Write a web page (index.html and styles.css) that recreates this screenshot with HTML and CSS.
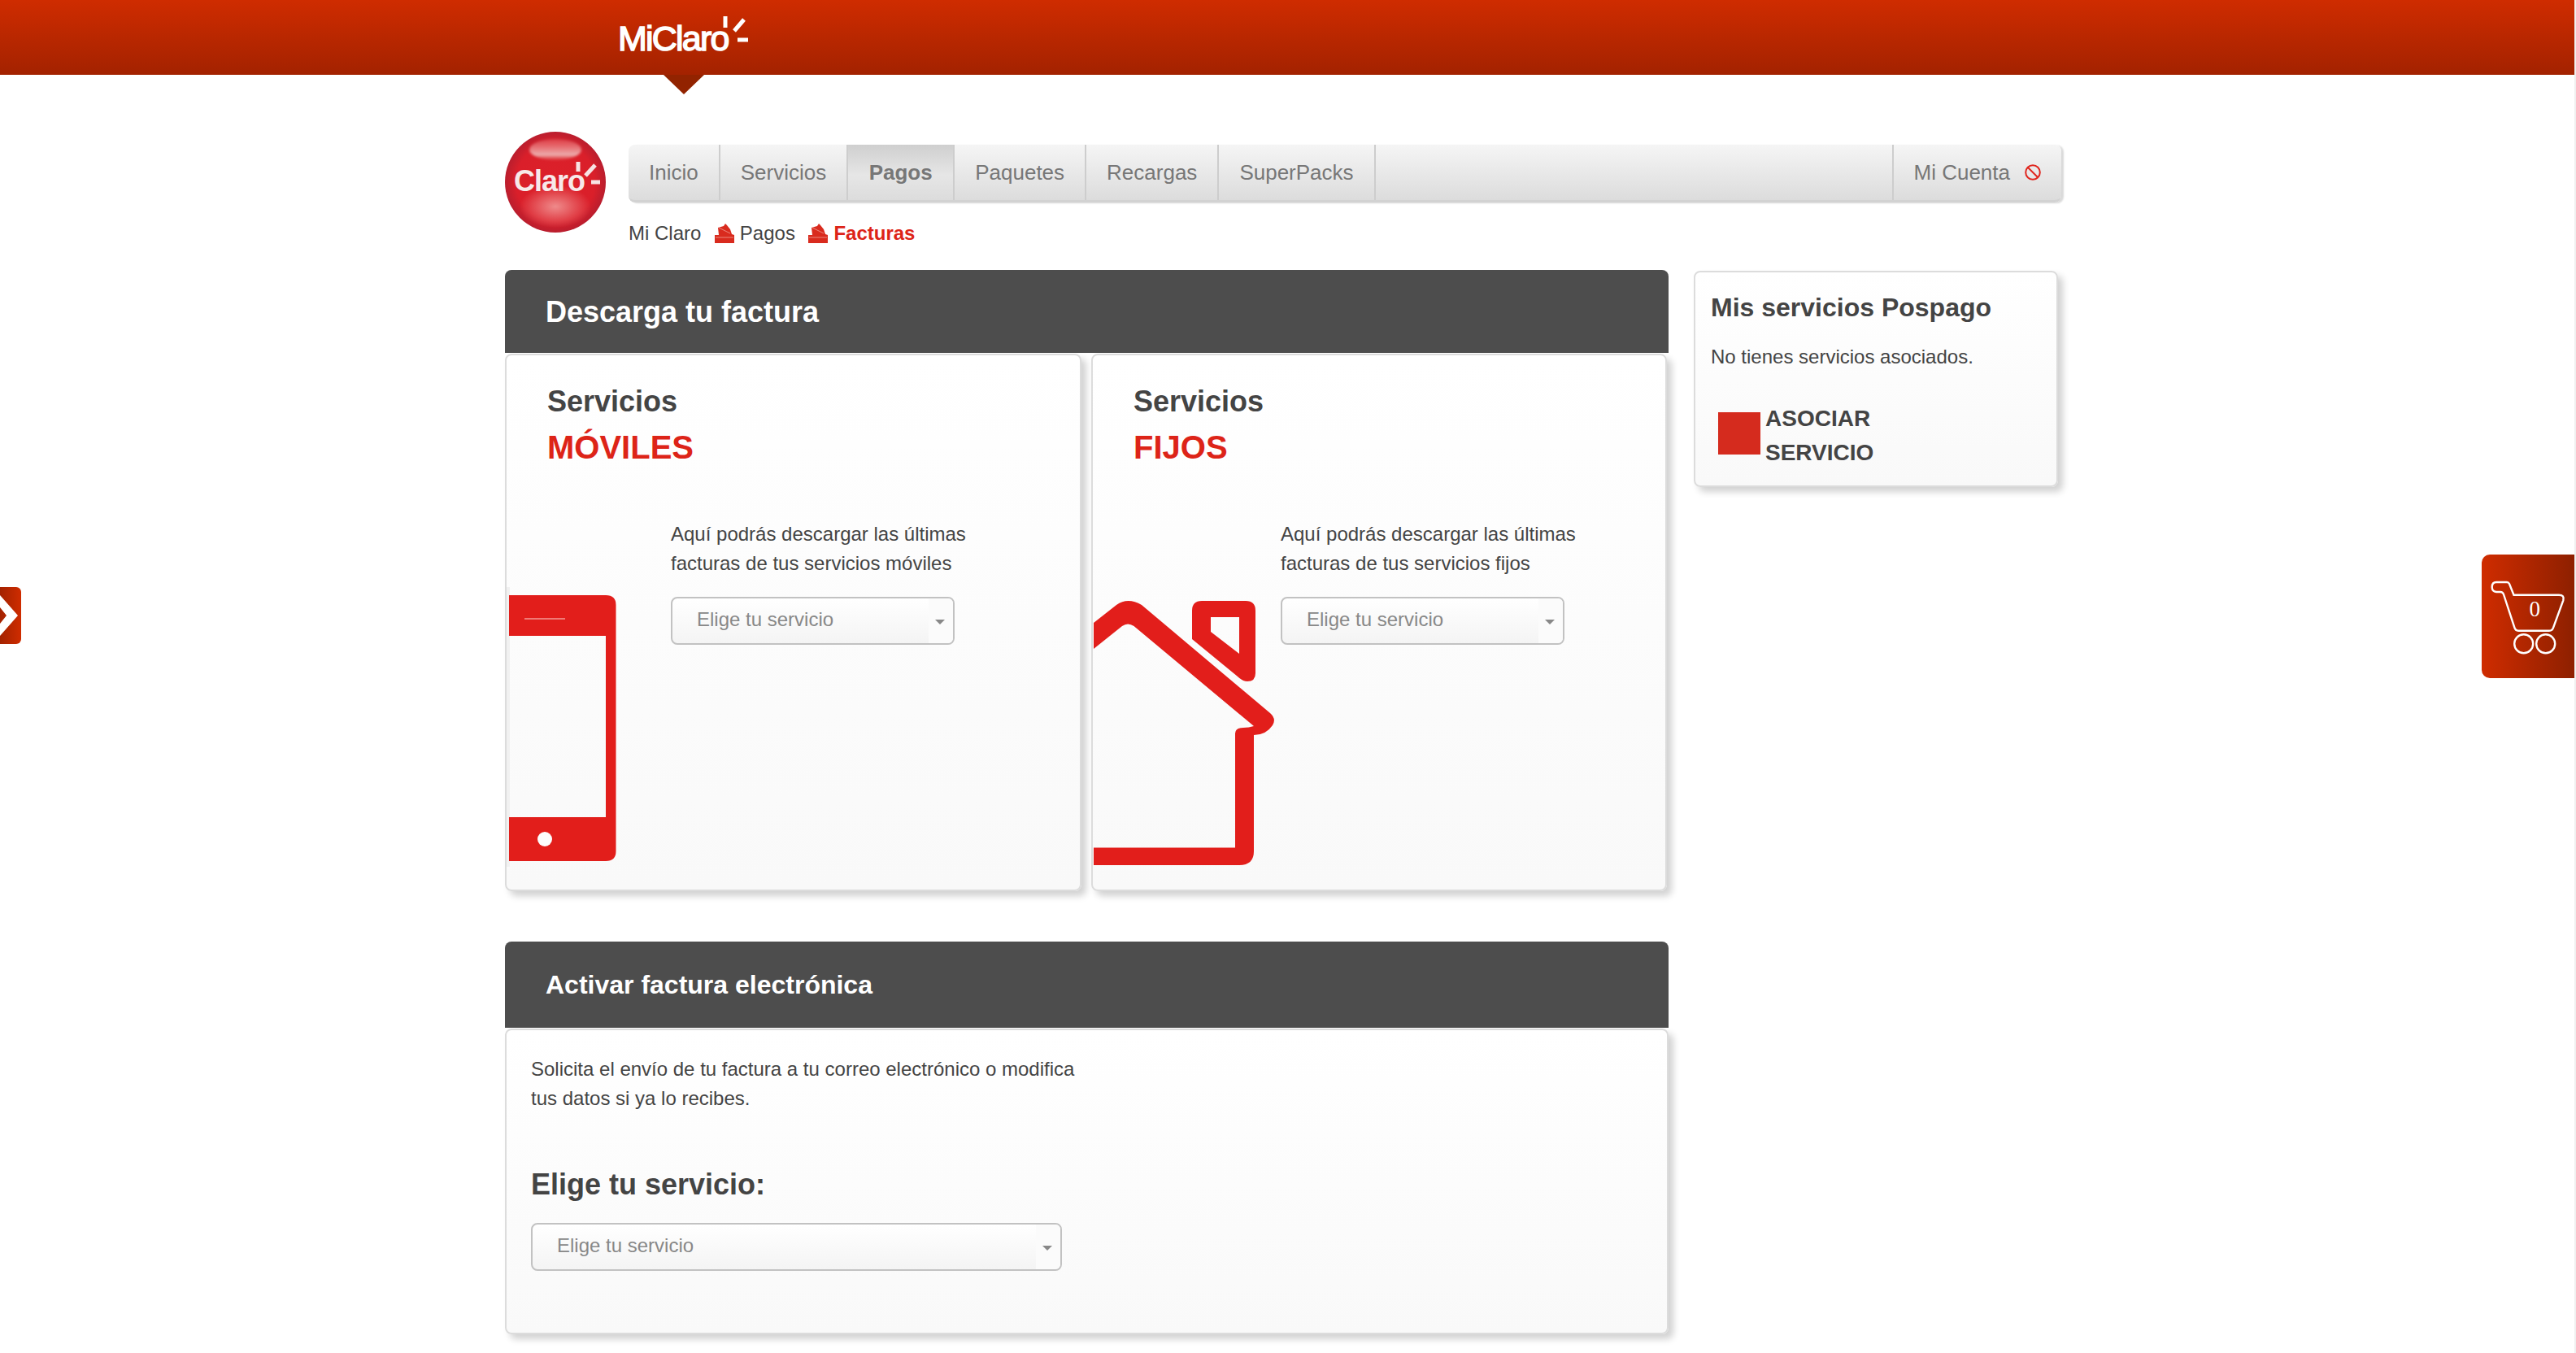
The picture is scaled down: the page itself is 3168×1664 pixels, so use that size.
FILE: index.html
```html
<!DOCTYPE html>
<html lang="es">
<head>
    <meta charset="UTF-8">
    <meta name="viewport" content="width=device-width, initial-scale=1.0">
    <title>Mi Claro - Facturas</title>
    <link rel="stylesheet" href="styles.css">
</head>
<body>
    <header class="top-bar">
        <div class="top-logo">
            <span class="top-logo-text">MiClaro</span>
            <svg class="top-logo-rays" width="40" height="40" viewBox="0 0 40 40">
                <path d="M12 6V20M35 10L23 24M27 35H40" stroke="#fff" stroke-width="5" fill="none"/>
            </svg>
        </div>
    </header>

    <a class="side-tab" href="#">
        <svg width="26" height="70" viewBox="0 0 26 70">
            <polygon points="0,10 22,35 0,60 0,45 8,35 0,25" fill="#fff"/>
        </svg>
    </a>

    <a class="cart-tab" href="#">
        <svg width="114" height="152" viewBox="0 0 114 152">
            <path d="M18 34H31Q33 34 34 36L39.5 49.7H95Q102 49.7 100.3 56.3L88 90Q87 93.7 83 93.7H45Q41.5 93.7 40.3 89.7L27 49Q26 46 23 46H18Q12.7 45.5 12.7 40Q12.7 34 18 34Z" fill="none" stroke="#fff" stroke-width="2.4"/>
            <circle cx="51.7" cy="109.7" r="11.5" fill="none" stroke="#fff" stroke-width="2.4"/>
            <circle cx="78.7" cy="109.7" r="11.5" fill="none" stroke="#fff" stroke-width="2.4"/>
            <text class="cart-count" x="65.3" y="76" text-anchor="middle">0</text>
        </svg>
    </a>

    <main class="page">
        <div class="page-top">
            <svg class="claro-logo" width="124" height="124" viewBox="0 0 124 124">
                <defs>
                    <radialGradient id="ball" cx="50%" cy="50%" r="50%">
                        <stop offset="0%" stop-color="#dc2029"/>
                        <stop offset="78%" stop-color="#da1f2a"/>
                        <stop offset="100%" stop-color="#b91e2e"/>
                    </radialGradient>
                    <linearGradient id="shine" x1="0" y1="0" x2="0" y2="1">
                        <stop offset="0%" stop-color="#e88" stop-opacity=".3"/>
                        <stop offset="75%" stop-color="#eeb4b4" stop-opacity=".95"/>
                        <stop offset="100%" stop-color="#e24a4a" stop-opacity=".4"/>
                    </linearGradient>
                    <radialGradient id="glow">
                        <stop offset="0%" stop-color="#f09090" stop-opacity=".95"/>
                        <stop offset="100%" stop-color="#f09090" stop-opacity="0"/>
                    </radialGradient>
                    <filter id="soft" x="-20%" y="-40%" width="140%" height="180%">
                        <feGaussianBlur stdDeviation="1.8"/>
                    </filter>
                </defs>
                <circle cx="62" cy="62" r="62" fill="url(#ball)"/>
                <ellipse cx="62" cy="22" rx="32" ry="13" fill="url(#shine)" filter="url(#soft)"/>
                <ellipse cx="62" cy="92" rx="44" ry="26" fill="url(#glow)"/>
                <text class="claro-logo-text" x="11" y="73">Claro</text>
                <path d="M90 37V49M111 41L99 54M106 62H117" stroke="#f7e4e4" stroke-width="5" fill="none"/>
            </svg>
            <div class="page-top-right">
                <nav class="main-nav">
                    <a class="nav-item" href="#">Inicio</a>
                    <a class="nav-item" href="#">Servicios</a>
                    <a class="nav-item active" href="#">Pagos</a>
                    <a class="nav-item" href="#">Paquetes</a>
                    <a class="nav-item" href="#">Recargas</a>
                    <a class="nav-item" href="#">SuperPacks</a>
                    <a class="nav-item nav-account" href="#">
                        Mi Cuenta
                        <svg width="20" height="20" viewBox="0 0 20 20">
                            <circle cx="10" cy="10" r="8.8" fill="none" stroke="#e0261e" stroke-width="2"/>
                            <path d="M4 4L16 16" stroke="#e0261e" stroke-width="2"/>
                        </svg>
                    </a>
                </nav>
                <div class="crumbs">
                    <span>Mi Claro</span>
                    <span class="crumb">
                        <svg width="24" height="24" viewBox="0 0 24 24">
                            <path d="M0 14H5L4 5L11 3L13 0L15 2L19 7L21 13L24 14V24H0Z" fill="#d92b1e"/>
                            <path d="M5 5L19 12M1 17H23" stroke="#f3b0a8" stroke-width=".7" fill="none"/>
                        </svg>
                        Pagos
                    </span>
                    <span class="crumb current">
                        <svg width="24" height="24" viewBox="0 0 24 24">
                            <path d="M0 14H5L4 5L11 3L13 0L15 2L19 7L21 13L24 14V24H0Z" fill="#d92b1e"/>
                            <path d="M5 5L19 12M1 17H23" stroke="#f3b0a8" stroke-width=".7" fill="none"/>
                        </svg>
                        Facturas
                    </span>
                </div>
            </div>
        </div>

        <div class="content">
            <div class="content-main">
                <h1 class="bar">Descarga tu factura</h1>
                <div class="service-cards">
                    <section class="card service-card">
                        <h2 class="service-title">Servicios<br><span class="red">MÓVILES</span></h2>
                        <div class="service-body">
                            <svg class="phone-icon" width="140" height="344" viewBox="0 0 140 344">
                                <rect x="0" y="0" width="4" height="344" fill="#f1f1f1"/>
                                <path d="M3 10H122Q134.500 10 134.500 22V325Q134.500 337 122 337H3V283H122V60H3Z" fill="#e21e1b"/>
                                <path d="M22 39H72" stroke="#f59a96" stroke-width="1.6"/>
                                <circle cx="47" cy="310" r="9" fill="#fdfdfd"/>
                            </svg>
                            <div class="service-text">
                                <p>Aquí podrás descargar las últimas<br>facturas de tus servicios móviles</p>
                                <div class="select select-small"><span>Elige tu servicio</span></div>
                            </div>
                        </div>
                    </section>
                    <section class="card service-card">
                        <h2 class="service-title">Servicios<br><span class="red">FIJOS</span></h2>
                        <div class="service-body">
                            <svg class="house-icon" width="225" height="340" viewBox="0 0 225 340">
                                <path d="M1 34L29 12Q43 2 60 12L218 145Q226 152 221 160Q213 172 198 172V315Q198 332 180 332H1V310.5H175V170Q175 163 185 163Q192 163 198 161L50.5 38Q43 33 36 38L1 66Z" fill="#e21e1b"/>
                                <path fill-rule="evenodd" d="M122 19Q122 7 134 7H188Q200 7 200 19V96Q200 106 190 106Q184 106 178 100L122 54ZM145 27V45L180 72V27Z" fill="#e21e1b"/>
                            </svg>
                            <div class="service-text">
                                <p>Aquí podrás descargar las últimas<br>facturas de tus servicios fijos</p>
                                <div class="select select-small"><span>Elige tu servicio</span></div>
                            </div>
                        </div>
                    </section>
                </div>

                <h1 class="bar bar-small">Activar factura electrónica</h1>
                <section class="card activate-card">
                    <p>Solicita el envío de tu factura a tu correo electrónico o modifica<br>tus datos si ya lo recibes.</p>
                    <h2 class="activate-title">Elige tu servicio:</h2>
                    <div class="select select-wide"><span>Elige tu servicio</span></div>
                </section>
            </div>

            <aside class="card side-card">
                <h3>Mis servicios Pospago</h3>
                <p>No tienes servicios asociados.</p>
                <a class="add-service" href="#">
                    <span class="add-service-icon"></span>
                    <span>ASOCIAR<br>SERVICIO</span>
                </a>
            </aside>
        </div>
    </main>
</body>
</html>
```

FILE: styles.css
```css
html, body {
  height: 100%;
}

body {
  margin: 0;
  background-color: #fff;
  border-right: 2px solid #f0f0f0;
  box-sizing: border-box;
  overflow: hidden;
  font-family: "Liberation Sans", Arial, sans-serif;
  font-size: 24px;
  color: #444;
}

h1, h2, h3, p {
  margin: 0;
}

a {
  color: inherit;
  text-decoration: none;
}

.red {
  color: #dd2418;
  font-size: 40px;
}

/* top red bar */
.top-bar {
  height: 92px;
  background: linear-gradient(#cf2c00, #a32200);
}

.top-logo {
  position: relative;
  width: 170px;
  margin-left: 760px;
  padding-top: 22px;
}

.top-logo::after {
  content: "";
  position: absolute;
  top: 92px;
  left: 56px;
  border-left: 25px solid transparent;
  border-right: 25px solid transparent;
  border-top: 24px solid #922300;
}

.top-logo-text {
  font-size: 43px;
  line-height: 50px;
  letter-spacing: -1.8px;
  color: #fff;
  -webkit-text-stroke: 1.5px #fff;
}

.top-logo-rays {
  position: absolute;
  top: 14px;
  left: 120px;
}

/* fixed tabs */
.side-tab {
  position: fixed;
  left: 0;
  top: 722px;
  width: 26px;
  height: 70px;
  border-radius: 0 6px 6px 0;
  background: linear-gradient(to right, #a32200, #cf2c00);
}

.side-tab svg, .cart-tab svg {
  display: block;
}

.cart-tab {
  position: fixed;
  right: 2px;
  top: 682px;
  width: 114px;
  height: 152px;
  border-radius: 10px 0 0 10px;
  background: linear-gradient(to right, #cf2c00, #8e2000);
}

.cart-count {
  font-family: "Liberation Serif", serif;
  font-size: 27px;
  fill: #fff;
}

/* page */
.page {
  width: 1917px;
  margin-left: 621px;
  padding-top: 70px;
}

.page-top {
  display: flex;
  gap: 28px;
}

.claro-logo {
  flex: none;
}

.claro-logo-text {
  font-size: 36px;
  font-weight: bold;
  letter-spacing: -1px;
  fill: #f7e9e9;
}

.page-top-right {
  flex: 1;
  padding-top: 16px;
}

.main-nav {
  display: flex;
  height: 71px;
  box-sizing: border-box;
  margin-right: 3px;
  border-bottom: 3px solid #d2d2d2;
  border-radius: 8px;
  background: linear-gradient(#f5f5f5, #dcdcdc);
  box-shadow: 3px 1px 2px rgba(0, 0, 0, .15);
  overflow: hidden;
}

.nav-item {
  display: flex;
  align-items: center;
  padding: 0 25px;
  border-right: 2px solid #cdcdcd;
  font-size: 26px;
  color: #777;
}

.nav-item.active {
  padding: 0 25.5px;
  font-weight: bold;
  background: linear-gradient(#cfcfcf, #e6e6e6 55%, #dcdcdc);
}

.nav-account {
  margin-left: auto;
  gap: 18px;
  padding: 0 25px;
  border-right: none;
  border-left: 2px solid #cdcdcd;
}

.crumbs {
  display: flex;
  align-items: center;
  gap: 16.5px;
  height: 30px;
  margin-top: 23px;
  color: #444;
}

.crumb {
  display: flex;
  align-items: center;
  gap: 7px;
}

.crumb.current {
  font-weight: bold;
  color: #dd2418;
}

.content {
  display: flex;
  gap: 31px;
  margin-top: 30px;
}

.content-main {
  width: 1431px;
}

.bar {
  display: flex;
  align-items: center;
  height: 102px;
  padding: 1px 0 0 50px;
  box-sizing: border-box;
  border-radius: 8px 8px 0 0;
  background-color: #4d4d4d;
  font-size: 36px;
  color: #fff;
}

.bar-small {
  height: 106px;
  margin-top: 62px;
  font-size: 32px;
}

.card {
  box-sizing: border-box;
  border: 2px solid #dcdcdc;
  border-radius: 8px;
  background: linear-gradient(#fff, #f9f9f9);
  box-shadow: 6px 6px 8px rgba(0, 0, 0, .18);
}

.service-cards {
  display: grid;
  grid-template-columns: 709px 708px;
  gap: 12px;
  margin-top: 1px;
}

.service-card {
  height: 661px;
}

.service-title {
  padding: 29px 0 0 50px;
  font-size: 36px;
  line-height: 56px;
}

.service-body {
  display: flex;
  align-items: flex-start;
  margin-top: 59px;
}

.phone-icon {
  flex: none;
  margin-top: 83px;
  margin-right: 62px;
}

.house-icon {
  flex: none;
  margin-top: 93px;
  margin-right: 6px;
}

.service-text p, .activate-card p, .side-card p {
  line-height: 36px;
}

.select {
  position: relative;
  height: 59px;
  box-sizing: border-box;
  margin-top: 23px;
  padding-left: 30px;
  border: 2px solid #c2c2c2;
  border-radius: 8px;
  background: linear-gradient(#fff, #f4f4f4);
  line-height: 52px;
  color: #888;
}

.select::before {
  content: "";
  position: absolute;
  top: 0;
  right: 0;
  bottom: 0;
  width: 30px;
  border-radius: 0 6px 6px 0;
  background-color: #fbfbfb;
}

.select::after {
  content: "";
  position: absolute;
  top: 26px;
  right: 10px;
  border-left: 6px solid transparent;
  border-right: 6px solid transparent;
  border-top: 6px solid #888;
}

.select-small {
  width: 349px;
}

.select-wide {
  width: 653px;
  margin-top: 22px;
}

.activate-card {
  height: 376px;
  margin-top: 1px;
  padding: 30px 0 0 30px;
}

.activate-title {
  margin-top: 63px;
  font-size: 36px;
  line-height: 50px;
}

.side-card {
  width: 448px;
  height: 266px;
  margin-top: 1px;
  padding: 24px 0 0 19px;
}

.side-card h3 {
  font-size: 32px;
  line-height: 38px;
}

.side-card p {
  margin-top: 24px;
}

.add-service {
  display: flex;
  gap: 6px;
  margin-top: 37px;
  margin-left: 9px;
  font-size: 28px;
  font-weight: bold;
  line-height: 42px;
}

.add-service-icon {
  width: 52px;
  height: 52px;
  margin-top: 13px;
  background-color: #d52b1e;
}
```
